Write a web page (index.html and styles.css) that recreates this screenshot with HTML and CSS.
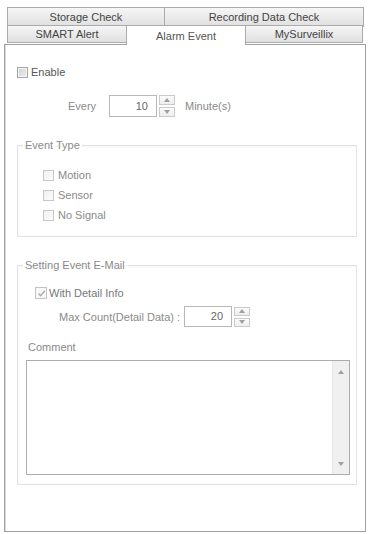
FILE: index.html
```html
<!DOCTYPE html>
<html>
<head>
<meta charset="utf-8">
<link rel="stylesheet" href="styles.css">
</head>
<body>
<div class="tabstrip">
  <div class="tabrow row1">
    <div class="tab t-storage">Storage Check</div>
    <div class="tab t-record">Recording Data Check</div>
  </div>
  <div class="tabrow row2">
    <div class="tab t-smart">SMART Alert</div>
    <div class="tab t-alarm selected">Alarm Event</div>
    <div class="tab t-mysurv">MySurveillix</div>
  </div>
</div>
<div class="panel">
  <div class="enable-row">
    <span class="cb cb-enable"></span>
    <span class="lbl-dark">Enable</span>
  </div>
  <div class="every-row">
    <span class="lbl every-lbl">Every</span>
    <div class="num-input every-input">10</div>
    <div class="spinner">
      <div class="spin-btn"><svg width="6" height="4" viewBox="0 0 6 4"><path d="M0 4 L3 0 L6 4 Z" fill="#a0a0a0"/></svg></div>
      <div class="spin-btn"><svg width="6" height="4" viewBox="0 0 6 4"><path d="M0 0 L3 4 L6 0 Z" fill="#a0a0a0"/></svg></div>
    </div>
    <span class="lbl minute-lbl">Minute(s)</span>
  </div>
  <fieldset class="group group-event">
    <legend class="legend">Event Type</legend>
    <div class="group-body event-body">
      <div class="cb-row"><span class="cb cb-dis"></span><span class="lbl">Motion</span></div>
      <div class="cb-row"><span class="cb cb-dis"></span><span class="lbl">Sensor</span></div>
      <div class="cb-row"><span class="cb cb-dis"></span><span class="lbl">No Signal</span></div>
    </div>
  </fieldset>
  <fieldset class="group group-mail">
    <legend class="legend">Setting Event E-Mail</legend>
    <div class="group-body mail-body">
      <div class="detail-row">
        <span class="cb cb-checked"><svg width="9" height="9" viewBox="0 0 9 9"><path d="M1.5 4.5 L3.6 6.8 L7.8 1.8" fill="none" stroke="#ababab" stroke-width="1.4"/></svg></span>
        <span class="lbl lbl-detail">With Detail Info</span>
      </div>
      <div class="max-row">
        <span class="lbl">Max Count(Detail Data) :</span>
        <div class="num-input max-input">20</div>
        <div class="spinner spinner-max">
          <div class="spin-btn"><svg width="6" height="4" viewBox="0 0 6 4"><path d="M0 4 L3 0 L6 4 Z" fill="#a0a0a0"/></svg></div>
          <div class="spin-btn"><svg width="6" height="4" viewBox="0 0 6 4"><path d="M0 0 L3 4 L6 0 Z" fill="#a0a0a0"/></svg></div>
        </div>
      </div>
      <div class="lbl comment-lbl">Comment</div>
      <div class="textarea">
        <div class="text-body"></div>
        <div class="scrollbar">
          <svg width="6" height="4" viewBox="0 0 6 4"><path d="M0 4 L3 0 L6 4 Z" fill="#a0a0a0"/></svg>
          <svg width="6" height="4" viewBox="0 0 6 4"><path d="M0 0 L3 4 L6 0 Z" fill="#a0a0a0"/></svg>
        </div>
      </div>
    </div>
  </fieldset>
</div>
</body>
</html>
```
FILE: styles.css
```css
* { box-sizing: border-box; }
html, body { margin: 0; padding: 0; background: #fff; }
body {
  font-family: "Liberation Sans", Arial, sans-serif;
  font-size: 11px;
  color: #888;
  width: 368px;
  height: 534px;
  overflow: hidden;
}
.tabstrip { padding-top: 7px; margin-left: 7px; width: 357px; }
.tabrow { display: flex; align-items: flex-start; }
.row1 { height: 19px; }
.row2 { height: 18px; }
.tab {
  border: 1px solid #ababab;
  background: linear-gradient(#f6f6f6, #e0e0e0);
  color: #444;
  display: flex;
  align-items: center;
  justify-content: center;
  font-size: 11px;
}
.row1 .tab { height: 20px; }
.row2 .tab { height: 18px; margin-top: -1px; }
.t-storage { width: 158px; }
.t-record { width: 200px; margin-left: -1px; }
.t-smart { width: 120px; }
.t-alarm { width: 120px; margin-left: -1px; }
.t-mysurv { width: 118px; margin-left: -1px; }
.row2 .tab.selected {
  background: #fff;
  height: 20px;
  margin-top: -1px;
  margin-bottom: -1px;
  border-bottom: none;
  position: relative;
  color: #555;
}
.panel {
  margin-left: 4px;
  width: 362px;
  height: 488px;
  border: 1px solid #a0a0a0;
  box-shadow: inset 1px 0 #dcdcdc;
  padding-top: 20px;
}
.lbl { color: #8a8a8a; line-height: 14px; }
.lbl-dark { color: #555; line-height: 14px; }
.enable-row {
  display: flex;
  align-items: center;
  height: 14px;
  padding-left: 12px;
  gap: 3px;
}
.cb {
  display: inline-flex;
  align-items: center;
  justify-content: center;
  width: 11px;
  height: 11px;
  border: 1px solid #b8b8b8;
  background: #fff;
  flex: none;
}
.cb-enable {
  border-color: #a4a4a4;
  background: linear-gradient(135deg, #d2d2d2, #ececec);
  box-shadow: inset 0 0 0 1px #f6f6f6;
}
.cb-dis {
  border-color: #c8c8c8;
  background: linear-gradient(135deg, #f0f0f0, #fbfbfb);
}
.cb-checked {
  width: 12px;
  height: 12px;
  border-color: #c4c4c4;
  background: #f8f8f8;
}
.every-row {
  display: flex;
  align-items: center;
  height: 22px;
  margin-top: 16px;
  padding-left: 63px;
}
.every-lbl { width: 41px; }
.num-input {
  border: 1px solid #b8b8b8;
  background: #fff;
  color: #666;
  text-align: right;
  padding-right: 8px;
  line-height: 20px;
  height: 22px;
}
.every-input { width: 48px; }
.spinner {
  display: flex;
  flex-direction: column;
  justify-content: space-between;
  width: 16px;
  height: 22px;
  margin-left: 2px;
}
.spin-btn {
  height: 10px;
  border: 1px solid #cacaca;
  background: linear-gradient(#fbfbfb, #eeeeee);
  display: flex;
  align-items: center;
  justify-content: center;
}
.minute-lbl { margin-left: 10px; }
.group {
  margin: 0 8px 0 12px;
  padding: 0;
  border: 1px solid #e2e2e2;
  box-shadow: inset 1px 1px #f8f8f8;
  min-width: 0;
}
.legend {
  margin-left: 5px;
  padding: 0 2px;
  color: #8a8a8a;
  line-height: 14px;
  font-size: 11px;
}
.group-event { margin-top: 21px; height: 99px; }
.event-body { padding: 13px 0 11px 25px; }
.cb-row {
  display: flex;
  align-items: center;
  height: 20px;
  gap: 4px;
}
.group-mail { margin-top: 21px; }
.mail-body { padding: 14px 6px 9px 8px; }
.detail-row {
  display: flex;
  align-items: center;
  height: 14px;
  margin-left: 9px;
  gap: 2px;
}
.lbl-detail { color: #777; }
.max-row {
  display: flex;
  align-items: center;
  height: 21px;
  margin-top: 6px;
  margin-left: 33px;
}
.max-input { width: 48px; height: 21px; line-height: 19px; margin-left: 4px; }
.spinner-max { height: 20px; }
.spinner-max .spin-btn { height: 9px; }
.comment-lbl { margin-top: 13px; margin-left: 2px; height: 14px; }
.textarea {
  margin-top: 6px;
  height: 115px;
  border: 1px solid #acacac;
  display: flex;
  background: #fff;
}
.text-body { flex: 1; }
.scrollbar {
  width: 17px;
  background: #f0f0f0;
  border-left: 1px solid #e6e6e6;
  display: flex;
  flex-direction: column;
  justify-content: space-between;
  align-items: center;
  padding: 9px 0 8px;
}
```
